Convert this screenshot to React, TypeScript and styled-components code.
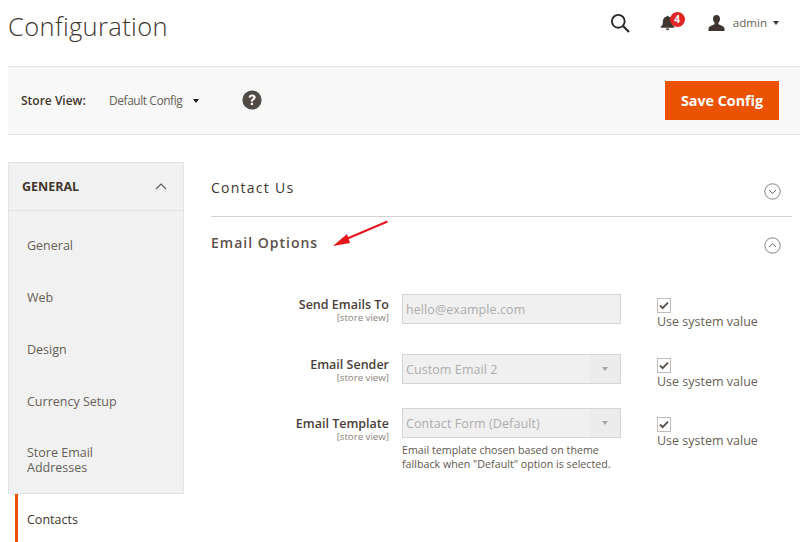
import React from "react";
import styled, { createGlobalStyle } from "styled-components";

const Global = createGlobalStyle`
  html, body { margin: 0; padding: 0; background: #fff; }
  body { font-family: "Open Sans", "Liberation Sans", sans-serif; color: #41362f; overflow: hidden; }
  * { box-sizing: border-box; }
`;

const Page = styled.div`
  position: relative;
  width: 800px;
  height: 542px;
  overflow: hidden;
  padding-left: 8px;
`;

const Header = styled.header`
  height: 66px;
  display: flex;
  align-items: flex-start;
  justify-content: space-between;
`;

const Title = styled.h1`
  margin: 7px 0 0;
  font-size: 25.5px;
  line-height: 38px;
  font-weight: 300;
  color: #41362f;
  letter-spacing: 0.35px;
`;

const Actions = styled.div`
  display: flex;
  align-items: center;
  height: 45px;
  padding-right: 21px;
`;

const IconSlot = styled.span<{ $gap: number }>`
  position: relative;
  display: flex;
  margin-right: ${(p) => p.$gap}px;
`;

const Badge = styled.span`
  position: absolute;
  left: 10px;
  top: -3px;
  width: 15px;
  height: 15px;
  border-radius: 50%;
  background: #e22626;
  color: #fff;
  font-size: 10px;
  line-height: 15px;
  font-weight: 700;
  text-align: center;
`;

const UserName = styled.span`
  font-size: 11.6px;
  color: #676056;
  margin: 0 6px 0 8px;
`;

const Caret = styled.span<{ $color: string }>`
  width: 0;
  height: 0;
  border-left: 3.5px solid transparent;
  border-right: 3.5px solid transparent;
  border-top: 4.5px solid ${(p) => p.$color};
`;

const Toolbar = styled.div`
  height: 69px;
  background: #f8f8f8;
  border-top: 1px solid #e3e3e3;
  border-bottom: 1px solid #e3e3e3;
  display: flex;
  align-items: center;
  padding: 0 21px 0 13px;
`;

const StoreLabel = styled.span`
  font-size: 12px;
  font-weight: 600;
  color: #41362f;
  margin-right: 23px;
  width: 65px;
  white-space: nowrap;
`;

const StoreValue = styled.span`
  font-size: 12px;
  color: #676056;
  letter-spacing: -0.45px;
  margin-right: 10.5px;
`;

const HelpIcon = styled.span`
  display: flex;
  margin: -2px 0 0 43.5px;
`;

const SaveButton = styled.button`
  margin-left: auto;
  width: 114px;
  height: 39px;
  background: #eb5202;
  border: 0;
  color: #fff;
  font-family: inherit;
  font-size: 14.3px;
  font-weight: 700;
  padding: 0;
`;

const Body = styled.div`
  display: flex;
  margin-top: 27px;
`;

const Sidebar = styled.aside`
  width: 176px;
  flex: none;
`;

const SideHead = styled.div`
  height: 49px;
  background: #f1f1f1;
  border: 1px solid #e3e3e3;
  display: flex;
  align-items: center;
  justify-content: space-between;
  padding: 0 16px 0 13px;
  font-size: 12.5px;
  font-weight: 700;
  color: #41362f;
`;

const SideList = styled.div`
  background: #f1f1f1;
  border: 1px solid #e3e3e3;
  border-top: 0;
  height: 283px;
  padding: 8px 0 0 18px;
`;

const SideItem = styled.div<{ $h: number }>`
  height: ${(p) => p.$h}px;
  display: flex;
  align-items: center;
  font-size: 12.5px;
  line-height: 15px;
  color: #676056;
  width: 110px;
`;

const ActiveItem = styled.div`
  margin-left: 7px;
  height: 60px;
  border-left: 3px solid #eb5202;
  padding: 17px 0 0 9px;
  font-size: 12.5px;
  line-height: 17px;
  color: #41362f;
`;

const Main = styled.main`
  margin-left: 27px;
  width: 581px;
`;

const SectionHead = styled.div<{ $border?: boolean; $h: number }>`
  height: ${(p) => p.$h}px;
  display: flex;
  align-items: center;
  justify-content: space-between;
  padding-right: 11px;
  border-bottom: ${(p) => (p.$border ? "1px solid #d1d1d1" : "0")};
  font-size: 14px;
  color: #41362f;
`;

const SectionTitle = styled.span<{ $weight: number; $spacing: number }>`
  font-weight: ${(p) => p.$weight};
  letter-spacing: ${(p) => p.$spacing}px;
  margin-bottom: 3px;
  color: ${(p) => (p.$weight > 500 ? "#5a504a" : "#41362f")};
`;

const ChevronSlot = styled.span<{ $shift: number }>`
  display: flex;
  margin-top: ${(p) => p.$shift}px;
`;

const Form = styled.div`
  padding-top: 23px;
`;

const Row = styled.div<{ $mb: number; $drop?: number }>`
  display: grid;
  grid-template-columns: 178px 219px 171px;
  column-gap: 13px;
  margin-bottom: ${(p) => p.$mb}px;
  --drop: ${(p) => p.$drop ?? 0}px;
`;

const LabelCol = styled.div`
  text-align: right;
  padding-top: calc(3px + var(--drop));
`;

const Label = styled.div`
  font-size: 12.5px;
  line-height: 15px;
  font-weight: 600;
  color: #4a403a;
`;

const Scope = styled.div`
  font-size: 9.8px;
  line-height: 11px;
  letter-spacing: -0.05px;
  color: #8a837b;
`;

const FieldBox = styled.div`
  position: relative;
  height: 30px;
  background: #f0f0f0;
  border: 1px solid #d6d6d6;
  padding-left: 3px;
  font-size: 12.5px;
  line-height: 29px;
  color: #adadad;
  letter-spacing: 0.08px;
`;

const SelectArrow = styled.span`
  position: absolute;
  right: 0;
  top: 0;
  bottom: 0;
  width: 30px;
  background: #ececec;
  display: flex;
  align-items: center;
  justify-content: center;
`;

const Note = styled.div`
  font-size: 10.7px;
  line-height: 14px;
  color: #5f574e;
  margin-top: 5px;
  white-space: nowrap;
`;

const InheritCol = styled.div`
  padding: calc(4px + var(--drop)) 0 0 23px;
  white-space: nowrap;
`;

const Check = styled.span`
  display: flex;
  width: 14px;
  height: 15px;
  border: 1px solid #bdbdbd;
  background: #fff;
  align-items: center;
  justify-content: center;
`;

const InheritLabel = styled.div`
  font-size: 12.5px;
  line-height: 17px;
  color: #676056;
`;

const Arrow = styled.svg`
  position: absolute;
  left: 330px;
  top: 218px;
`;

const CircleChevron = ({ up }: { up?: boolean }) => (
  <svg width="17" height="17" viewBox="0 0 17 17" fill="none" stroke="#6b625b" strokeWidth="0.8">
    <circle cx="8.5" cy="8.5" r="7.7" />
    <path d={up ? "M5 10l3.5-3.2L12 10" : "M5 7.2l3.5 3.2L12 7.2"} strokeWidth="1" />
  </svg>
);

const Checkbox = () => (
  <Check>
    <svg width="10" height="9" viewBox="0 0 10 9" fill="none" stroke="#5a5048" strokeWidth="1.8">
      <path d="M1 4.5l2.6 2.6L9 1.6" />
    </svg>
  </Check>
);

const Inherit = () => (
  <InheritCol>
    <Checkbox />
    <InheritLabel>Use system value</InheritLabel>
  </InheritCol>
);

export default function App() {
  return (
    <Page>
      <Global />
      <Header>
        <Title>Configuration</Title>
        <Actions>
          <IconSlot $gap={30}>
            <svg width="20" height="20" viewBox="0 0 20 20" fill="none" stroke="#2f2a26" strokeWidth="1.9">
              <circle cx="8.3" cy="8.3" r="6.4" />
              <path d="M13 13l6 6" strokeWidth="2.3" />
            </svg>
          </IconSlot>
          <IconSlot $gap={33}>
            <svg width="15" height="16" viewBox="0 0 15 16" fill="#41362f">
              <path d="M7.5 0.8c.7 0 1.1.4 1.2 1 2.3.5 3.4 2.3 3.4 4.6 0 2.6.6 4 2.2 5.4v1H.7v-1c1.6-1.4 2.2-2.8 2.2-5.4 0-2.3 1.1-4.1 3.4-4.6.1-.6.5-1 1.2-1z" />
              <path d="M5.8 13.5h3.4c0 1-.7 1.7-1.7 1.7s-1.7-.7-1.7-1.7z" />
            </svg>
            <Badge>4</Badge>
          </IconSlot>
          <svg width="17" height="16" viewBox="0 0 17 16" fill="#41362f">
            <path d="M8.5 0C6 0 5 1.8 5 3.8c0 1.6.7 3.2 1.6 4.1v1.2C5 10.4 1 11 .5 13.4V16h16v-2.6c-.5-2.4-4.5-3-6.1-4.3V7.9c.9-.9 1.6-2.5 1.6-4.1C12 1.8 11 0 8.5 0z" />
          </svg>
          <UserName>admin</UserName>
          <Caret $color="#41362f" />
        </Actions>
      </Header>

      <Toolbar>
        <StoreLabel>Store View:</StoreLabel>
        <StoreValue>Default Config</StoreValue>
        <Caret $color="#1f1a17" />
        <HelpIcon>
          <svg width="20" height="20" viewBox="0 0 20 20">
            <circle cx="10" cy="10" r="9.6" fill="#514943" />
            <path d="M6.6 7.6C6.8 5.5 8.2 4.4 10.2 4.4c2 0 3.4 1.2 3.4 2.9 0 1.4-.8 2.1-1.7 2.7-.7.5-.9.8-.9 1.6H8.8c0-1.4.4-2 1.3-2.7.7-.5 1.1-.8 1.1-1.4 0-.6-.4-1-1.1-1-.8 0-1.2.5-1.3 1.2z" fill="#fff" />
            <rect x="8.8" y="12.7" width="2.2" height="2.3" fill="#fff" />
          </svg>
        </HelpIcon>
        <SaveButton>Save Config</SaveButton>
      </Toolbar>

      <Body>
        <Sidebar>
          <SideHead>
            GENERAL
            <svg width="12" height="7" viewBox="0 0 12 7" fill="none" stroke="#5f564f" strokeWidth="1.1">
              <path d="M1 6l5-5 5 5" />
            </svg>
          </SideHead>
          <SideList>
            <SideItem $h={52}>General</SideItem>
            <SideItem $h={52}>Web</SideItem>
            <SideItem $h={52}>Design</SideItem>
            <SideItem $h={52}>Currency Setup</SideItem>
            <SideItem $h={66}>Store Email Addresses</SideItem>
          </SideList>
          <ActiveItem>Contacts</ActiveItem>
        </Sidebar>

        <Main>
          <SectionHead $border $h={55}>
            <SectionTitle $weight={400} $spacing={1.25}>Contact Us</SectionTitle>
            <ChevronSlot $shift={4}><CircleChevron /></ChevronSlot>
          </SectionHead>
          <SectionHead $h={54}>
            <SectionTitle $weight={600} $spacing={1}>Email Options</SectionTitle>
            <ChevronSlot $shift={3}><CircleChevron up /></ChevronSlot>
          </SectionHead>
          <Form>
            <Row $mb={24}>
              <LabelCol>
                <Label>Send Emails To</Label>
                <Scope>[store view]</Scope>
              </LabelCol>
              <FieldBox>hello@example.com</FieldBox>
              <Inherit />
            </Row>
            <Row $mb={18}>
              <LabelCol>
                <Label>Email Sender</Label>
                <Scope>[store view]</Scope>
              </LabelCol>
              <FieldBox>
                Custom Email 2
                <SelectArrow><Caret $color="#a5a5a5" /></SelectArrow>
              </FieldBox>
              <Inherit />
            </Row>
            <Row $mb={0} $drop={5}>
              <LabelCol>
                <Label>Email Template</Label>
                <Scope>[store view]</Scope>
              </LabelCol>
              <div>
                <FieldBox>
                  Contact Form (Default)
                  <SelectArrow><Caret $color="#a5a5a5" /></SelectArrow>
                </FieldBox>
                <Note>
                  Email template chosen based on theme<br />
                  fallback when "Default" option is selected.
                </Note>
              </div>
              <Inherit />
            </Row>
          </Form>
        </Main>
      </Body>

      <Arrow width="62" height="32" viewBox="0 0 62 32">
        <path d="M57.5 3.5L14 22" stroke="#e8161c" strokeWidth="2" fill="none" />
        <path d="M3 28l14-12 3 9z" fill="#e8161c" />
      </Arrow>
    </Page>
  );
}
